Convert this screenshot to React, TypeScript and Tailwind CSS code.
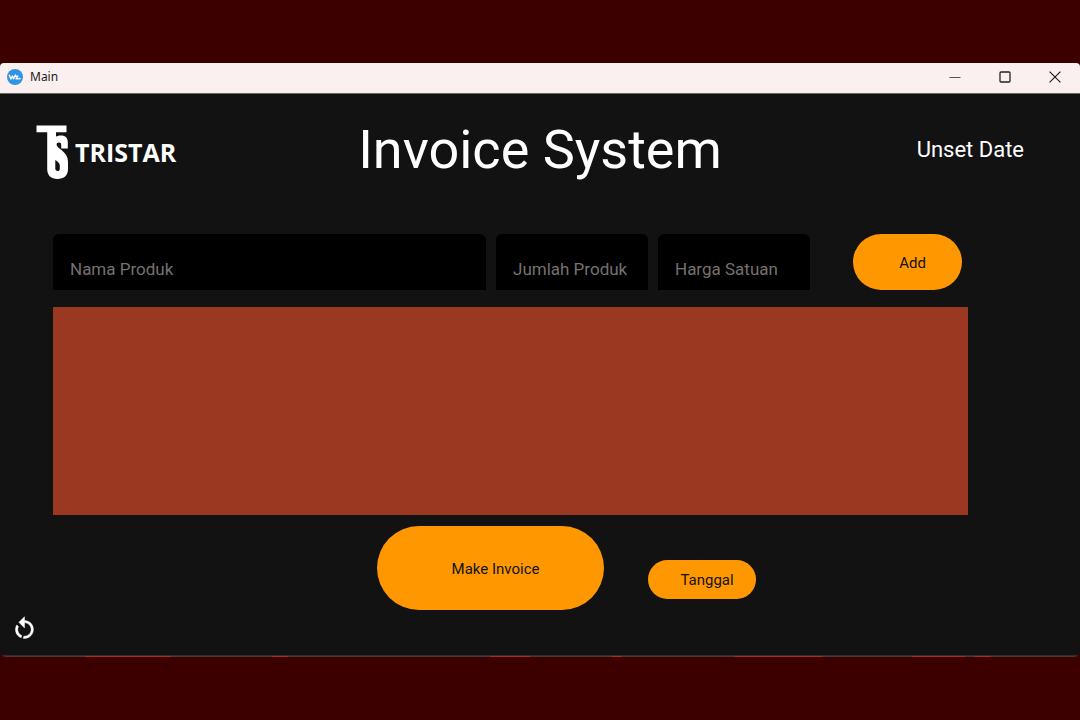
import { useState, type ReactNode } from "react";

function AppIcon() {
  return (
    <svg viewBox="0 0 16 16" className="size-4 shrink-0" aria-hidden="true">
      <circle cx="8" cy="8" r="8" fill="#2f93e6" />
      <path d="M2.4 6.3l1.5 3.6 1.6-2.8 1.1 2.6 1.9-3.6M8.6 7.2h2.2l-1.7 2.6h2.1" fill="none" stroke="#fff" strokeWidth="1.5" strokeLinejoin="round" strokeLinecap="round" />
      <circle cx="12.9" cy="9.6" r=".9" fill="#fff" />
    </svg>
  );
}

function TitleBar() {
  return (
    <header className="flex h-[31px] items-center justify-between border-b border-[#6b6767] bg-[#f9f0ef] pl-[7px] text-[#1f1b1b]">
      <div className="flex items-center gap-[7px] pb-[2px]">
        <AppIcon />
        <span className="font-['Noto_Sans',sans-serif] text-[12px] leading-4">Main</span>
      </div>
      <div className="flex h-full items-center pb-[2px]">
        <button aria-label="Minimize" className="flex w-[50px] justify-center">
          <svg viewBox="0 0 12 12" className="size-3"><path d="M.5 6.5h11" stroke="#555" fill="none" /></svg>
        </button>
        <button aria-label="Maximize" className="flex w-[50px] justify-center">
          <svg viewBox="0 0 12 12" className="size-3"><rect x="1" y="1" width="10" height="10" rx="1" fill="none" stroke="#222" strokeWidth="1.3" /></svg>
        </button>
        <button aria-label="Close" className="flex w-[50px] justify-center">
          <svg viewBox="0 0 12 12" className="size-3"><path d="M.6.6l10.8 10.8M11.4.6L.6 11.4" stroke="#222" strokeWidth="1.2" fill="none" /></svg>
        </button>
      </div>
    </header>
  );
}

function Logo() {
  return (
    <div className="-ml-5 flex items-center gap-[7px]">
      <svg viewBox="0 0 32 56" className="h-14 w-8" aria-hidden="true">
        <path fill="#fff" fillRule="evenodd" d="M.5 1.5H30.5V8.3H20V12.6C21.5 11.7 23 11.4 25 11.4C29.5 11.4 31.8 14 31.8 18V24.5H25.2V21C25.2 19.3 24.3 18.6 23 18.6C21.2 18.6 20.6 19.3 20.6 20.6C20.6 23 23 24.2 26 26.4C29.8 29.4 32 33 32 38V45C32 51.5 28 55 21.5 55C15 55 11.2 51.5 11.2 45V8.3H.5ZM19.3 36V44.6C19.3 46.2 20.2 47 21.6 47C23 47 23.8 46.2 23.8 44.4V41.5C23.8 39.3 21.8 37.5 19.3 36Z" />
      </svg>
      <span className="font-['Open_Sans',sans-serif] text-[25px] font-bold leading-8">TRISTAR</span>
    </div>
  );
}

function Field({ label, className }: { label: string; className: string }) {
  return (
    <input
      aria-label={label}
      placeholder={label}
      className={`h-14 min-w-0 rounded-t-md bg-black px-[17px] pt-[14px] text-[17px] text-white outline-none placeholder:text-[#767070] ${className}`}
    />
  );
}

function PillButton({ className, children }: { className: string; children: ReactNode }) {
  return (
    <button type="button" className={`rounded-full bg-[#ff9800] pl-[10px] pt-[2px] text-[15px] text-[#121212] ${className}`}>
      {children}
    </button>
  );
}

function EdgeGlow() {
  return (
    <svg viewBox="0 0 1080 1" preserveAspectRatio="none" className="block h-px w-full bg-[#4a3a37]" aria-hidden="true">
      <path d="M85 .5h86M272 .5h16M490 .5h40M612 .5h10M735 .5h88M912 .5h53M975 .5h16" stroke="#a83220" fill="none" />
    </svg>
  );
}

export default function App() {
  const [date] = useState("Unset Date");
  return (
    <div className="flex min-h-screen flex-col justify-center bg-[#3d0000] font-[Roboto,sans-serif] text-white">
      <div className="overflow-hidden rounded-t-[4px] rounded-b-md bg-[#121212]">
        <TitleBar />
        <main className="border-b border-[#332a29]">
          <div className="grid h-[140px] grid-cols-[1fr_auto_1fr] items-start px-14 pt-[30px]">
            <Logo />
            <h1 className="text-[54px] leading-[52px]">Invoice System</h1>
            <p className="justify-self-end text-[22px] leading-[52px]">{date}</p>
          </div>

          <div className="pl-[53px] pr-28">
            <form className="flex pr-[6px]" onSubmit={(e) => e.preventDefault()}>
              <Field label="Nama Produk" className="mr-[10px] flex-1" />
              <Field label="Jumlah Produk" className="mr-[10px] w-[152px]" />
              <Field label="Harga Satuan" className="mr-[43px] w-[152px]" />
              <PillButton className="h-14 w-[109px]">Add</PillButton>
            </form>
            <section aria-label="Items" className="mt-[17px] h-[208px] bg-[#9b3822]" />
            <div className="mt-[11px] flex items-end justify-center gap-11 pl-28">
              <PillButton className="h-[84px] w-[227px]">Make Invoice</PillButton>
              <PillButton className="mb-[11px] h-[39px] w-[108px]">Tanggal</PillButton>
            </div>
          </div>

          <div className="px-[11px] pb-3 pt-[6px]">
            <button aria-label="Reset" className="flex">
              <svg viewBox="0 0 24 24" className="size-[27px]" fill="#fff" stroke="#fff" strokeWidth=".4">
                <path d="M12,4C14.1,4 16.1,4.8 17.6,6.3C20.7,9.4 20.7,14.5 17.6,17.6C15.8,19.5 13.3,20.2 10.9,19.9L11.4,17.9C13.1,18.1 14.9,17.5 16.2,16.2C18.5,13.9 18.5,10.1 16.2,7.7C15.1,6.6 13.5,6 12,6V10.6L7,5.6L12,0.6V4M6.3,17.6C3.7,15 3.3,11 5.1,7.9L6.6,9.4C5.5,11.6 5.9,14.4 7.8,16.2C8.3,16.7 8.9,17.1 9.6,17.4L9,19.4C8,19 7.1,18.4 6.3,17.6Z" />
              </svg>
            </button>
          </div>
        </main>
        <EdgeGlow />
      </div>
    </div>
  );
}
